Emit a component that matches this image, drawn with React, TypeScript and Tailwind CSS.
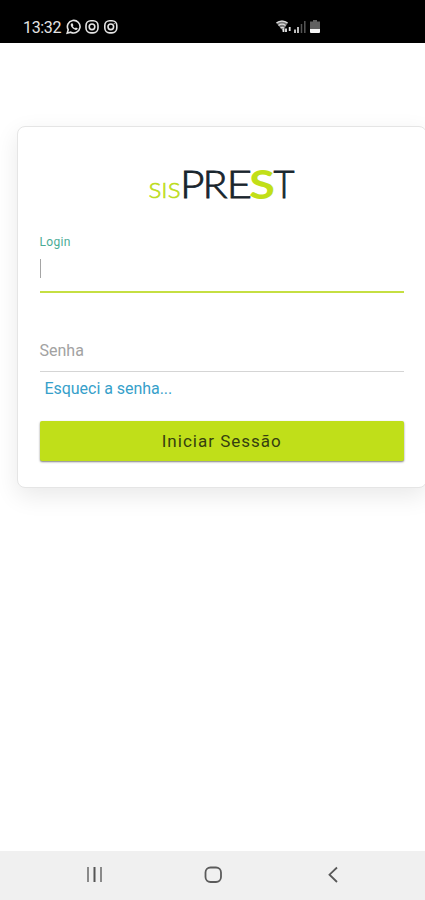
import React from 'react';

function StatusBar() {
  return (
    <header className="flex h-[42.5px] shrink-0 items-start bg-black pl-[23px] pt-[17.500px] text-[#e4e4e4]">
      <span className="w-[43px] text-[16px] leading-[19px] tracking-[-0.350px]">13:32</span>
      <svg className="mt-[1.500px] shrink-0" width="53" height="16" viewBox="0 0 53 16" fill="none" stroke="currentColor" strokeWidth="1.6">
        <path d="M1.2 14.2l1-3.5a6.3 6.3 0 1 1 2.5 2.5z" />
        <path d="M5.2 4.6l1.3-.3.9 2-.6.9c.6 1 1.3 1.6 2.2 2l.9-.8 1.8.9c0 1-.9 1.8-2 1.6C7.100 10.400 4.600 7.800 4.700 5.600z" fill="currentColor" stroke="none" />
        <rect x="20" y="1.700" width="12" height="12.200" rx="4.800" />
        <circle cx="26" cy="7.800" r="2.800" />
        <rect x="38.800" y="1.700" width="12" height="12.200" rx="4.800" />
        <circle cx="44.800" cy="7.800" r="2.800" />
        <circle cx="48.200" cy="4.600" r=".6" fill="currentColor" stroke="none" />
      </svg>
      <svg className="ml-[156px] mt-[1.500px] shrink-0" width="48" height="16" viewBox="0 0 48 16" fill="none">
        <path d="M1 3.500C4.500.700 9.500.700 13 3.500L8 12z" fill="#777" />
        <path d="M1.500 4C5 1.500 9 1.500 12.500 4M3.500 6.500c2.200-1.600 4.800-1.600 7 0M5.500 9c1.200-.8 2.300-.8 3.500 0" stroke="#ddd" strokeWidth="1.200" />
        <path d="M8.500 9.500v3.500M11 13V9.500M14.700 8v4" stroke="#e8e8e8" strokeWidth="1.800" />
        <path d="M20 10.500V14M23 8v6" stroke="#ddd" strokeWidth="1.700" />
        <path d="M26.500 5v9M29.800 2v12" stroke="#555" strokeWidth="1.500" />
        <path d="M38 1h4v1.500h3V10H35V2.500h3z" fill="#606060" />
        <path d="M35 10h10v3a1 1 0 0 1-1 1h-8a1 1 0 0 1-1-1z" fill="#f4f4f4" />
      </svg>
    </header>
  );
}

function Logo() {
  return (
    <svg className="ml-[105px] block shrink-0" width="156" height="56" viewBox="145 155 156 56" role="img" aria-label="sisPREST">
      <g fontFamily="Lato, sans-serif">
        <text x="148.500" y="197.500" fontSize="22" fontWeight="300" fill="#bddd20" stroke="#bddd20" strokeWidth="0.600" textLength="32" lengthAdjust="spacingAndGlyphs">SIS</text>
        <g fontSize="37.500" fontWeight="300" fill="#18252d" stroke="#18252d" strokeWidth="0.800">
          <text x="180" y="197.500" textLength="24.500" lengthAdjust="spacingAndGlyphs">P</text>
          <text x="202.500" y="197.500" textLength="25" lengthAdjust="spacingAndGlyphs">R</text>
          <text x="226.500" y="197.500" textLength="25.500" lengthAdjust="spacingAndGlyphs">E</text>
          <text x="273.500" y="197.500" textLength="21" lengthAdjust="spacingAndGlyphs">T</text>
        </g>
        <text x="249" y="198.500" fontSize="40" fontWeight="700" fill="#c1df18" textLength="26" lengthAdjust="spacingAndGlyphs">S</text>
      </g>
    </svg>
  );
}

function LoginCard() {
  return (
    <main className="ml-[16.500px] mt-[83px] flex h-[362px] w-[410px] flex-col rounded-[8px] border-[1.500px] border-[#e5e5e5] bg-white pl-[22px] pt-[28px] shadow-[0_8px_24px_rgba(0,0,0,0.09)]">
      <Logo />
      <form className="w-[364.500px]" onSubmit={(e) => e.preventDefault()}>
        <div className="mt-[23px] h-[59px] border-b-2 border-[#c5df42]">
          <div className="text-[12px] leading-[16px] tracking-[0.350px] text-[#4bac96]">Login</div>
          <div className="mt-[9px] h-[19px] w-px bg-[#a5a5a5]" />
        </div>
        <div className="flex h-[79px] items-end border-b-[1.500px] border-[#d5d5d5] pb-[10px] text-[16px] leading-[20px] text-[#a2a2a2]">Senha</div>
        <a className="mt-[7px] block pl-[5px] text-[16px] leading-[20px] tracking-[-0.040px] text-[#36a0ca]">Esqueci a senha...</a>
        <button type="submit" className="mt-[22px] flex h-[40px] w-full items-center justify-center rounded-[2px] bg-[#c0df19] pt-[3px] text-[17px] tracking-[1px] text-[#35400f] shadow-[0_1px_2px_rgba(0,0,0,0.5)]">Iniciar Sessão</button>
      </form>
    </main>
  );
}

function NavigationBar() {
  return (
    <nav className="mt-auto flex h-[49px] shrink-0 items-start bg-[#f0f0f0] pl-[84px] pt-[14px]">
      <svg width="20" height="20" viewBox="0 0 20 20" fill="none" strokeWidth="2">
        <path d="M4 2v15M17 2v15" stroke="#8a8a8a" />
        <path d="M10.500 2v15" stroke="#555" />
      </svg>
      <svg className="ml-[99px]" width="20" height="20" viewBox="0 0 20 20" fill="none" stroke="#5b5b5b" strokeWidth="1.800">
        <rect x="2.500" y="2.500" width="15.500" height="14.500" rx="5" />
      </svg>
      <svg className="ml-[100px]" width="20" height="20" viewBox="0 0 20 20" fill="none" stroke="#585858" strokeWidth="1.800">
        <path d="M14 2.500L6.500 9.700l7.500 7.300" />
      </svg>
    </nav>
  );
}

export default function App() {
  return (
    <div className="flex h-[900px] w-[425px] flex-col overflow-hidden bg-white font-[Roboto,sans-serif]">
      <StatusBar />
      <LoginCard />
      <NavigationBar />
    </div>
  );
}
